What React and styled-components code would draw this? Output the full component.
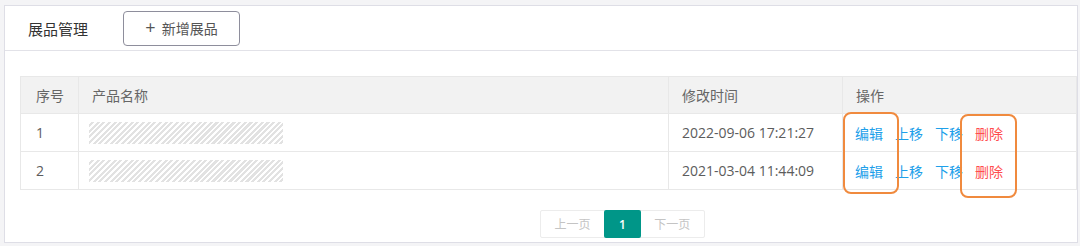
import React from 'react';
import styled, { createGlobalStyle } from 'styled-components';

const Global = createGlobalStyle`
  html, body {
    margin: 0;
    padding: 0;
    background: #f4f4f6;
    font-family: 'Open Sans', 'Noto Sans CJK SC', sans-serif;
  }
`;

const Page = styled.div`
  width: 1080px;
  height: 246px;
  box-sizing: border-box;
  padding: 5px 2px 3px 4px;
`;

const Panel = styled.div`
  height: 100%;
  box-sizing: border-box;
  background: #fff;
  border: 1px solid #dedee6;
  display: flex;
  flex-direction: column;
`;

const Header = styled.div`
  height: 44px;
  flex: none;
  display: flex;
  align-items: center;
  border-bottom: 1px solid #e2e2e8;
  padding-left: 23px;
`;

const Title = styled.div`
  width: 95px;
  font-size: 15px;
  color: #333;
`;

const AddButton = styled.button`
  width: 117px;
  height: 35px;
  box-sizing: border-box;
  border: 1px solid #8e8e9c;
  border-radius: 4px;
  background: #fff;
  font-family: inherit;
  font-size: 14px;
  color: #555;
  display: flex;
  align-items: center;
  justify-content: center;
  gap: 6px;
  padding: 0;
`;

const Plus = styled.span`
  font-size: 18px;
  line-height: 1;
  margin-top: -2px;
`;

const Body = styled.div`
  padding: 25px 0 0 15px;
`;

const TableWrap = styled.div`
  position: relative;
`;

const Table = styled.table`
  width: 100%;
  border-collapse: collapse;
  table-layout: fixed;
  font-size: 14px;
`;

const Th = styled.th`
  height: 37px;
  box-sizing: border-box;
  background: #f2f2f2;
  border: 1px solid #e8e8e8;
  text-align: left;
  font-weight: normal;
  color: #666;
  padding: 0 0 0 ${p => p.$pl || 13}px;
`;

const Td = styled.td`
  height: 38px;
  box-sizing: border-box;
  border: 1px solid #e8e8e8;
  color: #5c5c5c;
  padding: 0 0 0 ${p => p.$pl || 13}px;
  white-space: nowrap;
`;

const Hatch = styled.div`
  width: 194px;
  height: 22px;
  background: repeating-linear-gradient(135deg, #fff 0 1.8px, #e2e2e2 1.8px 4px);
`;

const Actions = styled.div`
  display: flex;
  gap: 12px;
`;

const Link = styled.span`
  color: ${p => (p.$danger ? '#ff4d4f' : '#1ea0ea')};
  cursor: pointer;
`;

const Mark = styled.div`
  position: absolute;
  border: 2px solid #f08a3e;
  border-radius: 8px;
  box-sizing: border-box;
  pointer-events: none;
`;

const Pager = styled.div`
  display: flex;
  margin: 20px 0 0 520px;
  width: 165px;
  height: 28px;
  box-sizing: border-box;
  border: 1px solid #ececec;
  border-radius: 2px;
  font-size: 12px;
`;

const PageBtn = styled.div`
  width: ${p => p.$w}px;
  display: flex;
  align-items: center;
  justify-content: center;
  color: ${p => (p.$active ? '#fff' : '#c4c4c4')};
  background: ${p => (p.$active ? '#009688' : 'transparent')};
  font-weight: ${p => (p.$active ? 600 : 'normal')};
  margin: ${p => (p.$active ? '-1px 0' : '0')};
  border-radius: ${p => (p.$active ? '2px' : '0')};
`;

const rows = [
  { id: 1, time: '2022-09-06 17:21:27' },
  { id: 2, time: '2021-03-04 11:44:09' },
];

export default function App() {
  return (
    <Page>
      <Global />
      <Panel>
        <Header>
          <Title>展品管理</Title>
          <AddButton>
            <Plus>+</Plus>
            新增展品
          </AddButton>
        </Header>
        <Body>
          <TableWrap>
            <Table>
              <colgroup>
                <col style={{ width: 58 }} />
                <col style={{ width: 590 }} />
                <col style={{ width: 174 }} />
                <col />
              </colgroup>
              <thead>
                <tr>
                  <Th $pl={15}>序号</Th>
                  <Th>产品名称</Th>
                  <Th>修改时间</Th>
                  <Th>操作</Th>
                </tr>
              </thead>
              <tbody>
                {rows.map(r => (
                  <tr key={r.id}>
                    <Td $pl={15}>{r.id}</Td>
                    <Td $pl={10}><Hatch /></Td>
                    <Td>{r.time}</Td>
                    <Td $pl={12}>
                      <Actions>
                        <Link>编辑</Link>
                        <Link>上移</Link>
                        <Link>下移</Link>
                        <Link $danger>删除</Link>
                      </Actions>
                    </Td>
                  </tr>
                ))}
              </tbody>
            </Table>
            <Mark style={{ left: 823, top: 36, width: 56, height: 82 }} />
            <Mark style={{ left: 940, top: 38, width: 57, height: 84 }} />
          </TableWrap>
          <Pager>
            <PageBtn $w={64}>上一页</PageBtn>
            <PageBtn $w={37} $active>1</PageBtn>
            <PageBtn $w={64}>下一页</PageBtn>
          </Pager>
        </Body>
      </Panel>
    </Page>
  );
}
